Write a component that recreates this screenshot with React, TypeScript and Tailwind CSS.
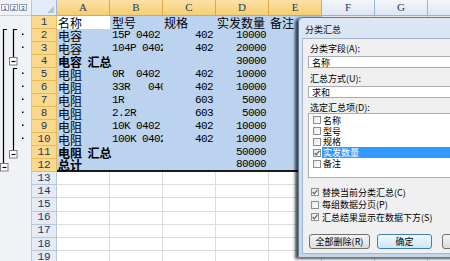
import type { ReactNode } from "react";

type Row = {
  a: string;
  b?: string;
  c?: string;
  d?: string;
  e?: string;
  bold?: boolean;
  head?: boolean;
};

const ROWS: Row[] = [
  { a: "名称", b: "型号", c: "规格", d: "实发数量", e: "备注", head: true },
  { a: "电容", b: "15P 0402", c: "402", d: "10000" },
  { a: "电容", b: "104P 0402", c: "402", d: "20000" },
  { a: "电容  汇总", d: "30000", bold: true },
  { a: "电阻", b: "0R  0402", c: "402", d: "10000" },
  { a: "电阻", b: "33R   0402", c: "402", d: "10000" },
  { a: "电阻", b: "1R", c: "603", d: "5000" },
  { a: "电阻", b: "2.2R", c: "603", d: "5000" },
  { a: "电阻", b: "10K 0402", c: "402", d: "10000" },
  { a: "电阻", b: "100K 0402", c: "402", d: "10000" },
  { a: "电阻  汇总", d: "50000", bold: true },
  { a: "总计", d: "80000", bold: true },
];

const COLS = ["A", "B", "C", "D", "E", "F", "G", "H"];
const DETAIL_ROWS = [2, 3, 5, 6, 7, 8, 9, 10];

function Minus({ x, y }: { x: number; y: number }) {
  return (
    <g>
      <rect x={x + 0.5} y={y + 0.5} width={7.5} height={7.5} fill="#fff" stroke="#7b7b7b" />
      <line x1={x + 2.5} y1={y + 4.5} x2={x + 6.5} y2={y + 4.5} stroke="#000" strokeWidth={1.2} />
    </g>
  );
}

function OutlinePane() {
  return (
    <div className="w-[32px] shrink-0 flex flex-col bg-[#f0f2f5] border-r border-[#bcc6d3]">
      {/* level buttons */}
      <div className="h-[16px] flex gap-[1px] pl-[1px] pt-[4px] border-b border-[#c5d0dd]">
        {["1", "2", "3"].map((n) => (
          <div
            key={n}
            className="w-[8px] h-[7px] border border-[#8f9eb3] bg-[#f7f8fa] flex items-center justify-center text-[6px] leading-none text-[#1e395b] font-['Liberation_Sans',sans-serif]"
          >
            {n}
          </div>
        ))}
      </div>
      <svg width="31" height="245" className="block">
        {/* level 2 bracket */}
        <path d="M7 13.5 H3.5 V147" fill="none" stroke="#000" strokeWidth={1.2} />
        {/* level 3 brackets */}
        <path d="M17 13.5 H13.5 V41" fill="none" stroke="#000" strokeWidth={1.2} />
        <path d="M17 52.5 H13.5 V134" fill="none" stroke="#000" strokeWidth={1.2} />
        {DETAIL_ROWS.map((r) => (
          <rect key={r} x={22} y={(r - 1) * 13 + 4.5} width={1.5} height={1.5} fill="#000" />
        ))}
        <Minus x={9} y={41} />
        <Minus x={9} y={134} />
        <Minus x={0} y={147} />
      </svg>
    </div>
  );
}

function HeaderRow() {
  return (
    <div className="h-[16px] flex">
      <div className="w-[25px] shrink-0 relative bg-[#e4ecf7] border-r border-b border-[#9eb6ce]">
        <svg width="8" height="8" className="absolute right-[1px] bottom-[1px]">
          <polygon points="7,0 7,7 0,7" fill="#b4c4d8" />
        </svg>
      </div>
      {COLS.map((c, i) => (
        <div
          key={c}
          className={
            i < 5
              ? "w-[53px] shrink-0 flex items-center justify-center bg-gradient-to-b from-[#fbe1a4] to-[#f6cd72] border-r border-b border-[#d9a94e] text-[11px] leading-none text-[#1e395b] font-['Liberation_Serif',serif]"
              : "w-[53px] shrink-0 flex items-center justify-center bg-gradient-to-b from-[#f3f6fb] to-[#dde6f2] border-r border-b border-[#9eb6ce] text-[11px] leading-none text-[#1e395b] font-['Liberation_Serif',serif]"
          }
        >
          {c}
        </div>
      ))}
    </div>
  );
}

function Cell({ children, className }: { children?: ReactNode; className: string }) {
  return <div className={className}>{children}</div>;
}

function DataRow({ row, n }: { row: Row; n: number }) {
  const last = n === 12;
  const sel = last
    ? "w-[53px] shrink-0 h-full flex items-center bg-[#bcd3ef] border-b-2 border-[#1c1c1c] whitespace-nowrap"
    : "w-[53px] shrink-0 h-full flex items-center bg-[#bcd3ef] whitespace-nowrap";
  const num = "font-['Liberation_Mono',monospace] text-[11px] tracking-[-0.6px]";
  const cjk = "text-[12px]";
  return (
    <div className="h-[13px] flex text-[12px] leading-[13px]">
      <div className="w-[25px] shrink-0 flex items-center justify-center bg-[#fad88c] border-r border-b border-[#eab95a] text-[11px] text-[#1e395b] font-['Liberation_Mono',monospace] leading-none">
        {n}
      </div>
      <Cell className={n === 1 ? "w-[53px] shrink-0 h-full flex items-center bg-white whitespace-nowrap" : sel}>
        <span className={row.bold ? "relative z-[1] pl-[1px] font-bold whitespace-pre " + cjk : "relative z-[1] pl-[1px] " + cjk}>
          {row.a}
        </span>
      </Cell>
      <Cell className={sel + " overflow-hidden"}>
        <span className={row.head ? "pl-[2px] " + cjk : "pl-[2px] whitespace-pre " + num}>{row.b}</span>
      </Cell>
      <Cell className={sel}>
        <span className={row.head ? "pl-[1px] " + cjk : "flex-1 pr-[3px] text-right " + num}>{row.c}</span>
      </Cell>
      <Cell className={sel}>
        <span className={row.head ? "pl-[1px] " + cjk : "flex-1 pr-[3px] text-right " + num}>{row.d}</span>
      </Cell>
      <Cell className={sel}>
        <span className={"pl-[1px] " + cjk}>{row.e}</span>
      </Cell>
      {[0, 1, 2].map((k) => (
        <div key={k} className="w-[53px] shrink-0 h-full border-r border-b border-[#dadcdd] bg-white" />
      ))}
    </div>
  );
}

function EmptyRow({ n }: { n: number }) {
  return (
    <div className="h-[13.2px] flex">
      <div className="w-[25px] shrink-0 flex items-center justify-center bg-[#e4ebf4] border-r border-b border-[#b8c8da] text-[11px] text-[#1e395b] font-['Liberation_Mono',monospace] leading-none">
        {n}
      </div>
      {COLS.map((c) => (
        <div key={c} className="w-[53px] shrink-0 h-full border-r border-b border-[#dadcdd] bg-white" />
      ))}
    </div>
  );
}

function Sheet() {
  return (
    <div className="flex flex-col">
      <HeaderRow />
      {ROWS.map((r, i) => (
        <DataRow key={i} row={r} n={i + 1} />
      ))}
      {[13, 14, 15, 16, 17, 18, 19].map((n) => (
        <EmptyRow key={n} n={n} />
      ))}
    </div>
  );
}

function Check({ on }: { on?: boolean }) {
  return (
    <div className="w-[8px] h-[8px] shrink-0 border border-[#8e8f8f] bg-gradient-to-br from-[#e6e6e6] to-[#ffffff] flex items-center justify-center">
      {on && (
        <svg width="6" height="6" viewBox="0 0 6 6">
          <path d="M0.6 3 L2.3 4.8 L5.4 0.8" fill="none" stroke="#4a5f80" strokeWidth={1.2} />
        </svg>
      )}
    </div>
  );
}

const LIST = ["名称", "型号", "规格", "实发数量", "备注"];

function Dialog() {
  return (
    <div className="absolute left-[298px] top-[17px] w-[165px] h-[241px] flex flex-col rounded-tl-[5px] border border-[#5f7b9e] bg-gradient-to-b from-[#dbe7f5] to-[#c3d6ee] shadow-[-3px_1px_3px_rgba(0,0,0,0.7)] text-[9px] leading-none text-black">
      <div className="h-[20px] shrink-0 flex items-center justify-between pl-[6px]">
        <span className="text-[#111] mt-[2px]">分类汇总</span>
        <div className="w-[8px] h-[13px] mt-[-5px] border border-r-0 border-[#8396b2] rounded-l-[3px] bg-gradient-to-b from-[#f5f8fc] to-[#d5e0ee]" />
      </div>
      <div className="flex-1 ml-[3px] mb-[3px] bg-[#f0f0f0] border border-r-0 border-[#a6b6ca] flex flex-col pl-[5px]">
        <div className="h-[11px] mt-[4px] pl-[2px] flex items-center">分类字段(A):</div>
        <div className="h-[12px] mt-[2px] border border-r-0 border-[#a5acb5] bg-white pl-[3px] flex items-center">名称</div>
        <div className="h-[11px] mt-[5px] pl-[2px] flex items-center">汇总方式(U):</div>
        <div className="h-[12px] mt-[2px] border border-r-0 border-[#a5acb5] bg-white pl-[3px] flex items-center">求和</div>
        <div className="h-[11px] mt-[4px] pl-[2px] flex items-center">选定汇总项(D):</div>
        <div className="h-[65px] border border-r-0 border-[#a5acb5] bg-white pt-[1px] flex flex-col">
          {LIST.map((t) => (
            <div key={t} className="h-[10.8px] flex items-center pl-[4px]">
              <Check on={t === "实发数量"} />
              <span
                className={
                  t === "实发数量"
                    ? "ml-[1px] flex-1 h-full flex items-center pl-[1px] bg-[#3399ff] text-white"
                    : "ml-[1px] flex-1 h-full flex items-center pl-[1px]"
                }
              >
                {t}
              </span>
            </div>
          ))}
        </div>
        <div className="mt-[8px] flex flex-col pl-[3px]">
          <div className="h-[12.5px] flex items-center gap-[3px]">
            <Check on />
            <span>替换当前分类汇总(C)</span>
          </div>
          <div className="h-[12.5px] flex items-center gap-[3px]">
            <Check />
            <span>每组数据分页(P)</span>
          </div>
          <div className="h-[12.5px] flex items-center gap-[3px]">
            <Check on />
            <span>汇总结果显示在数据下方(S)</span>
          </div>
        </div>
        <div className="mt-[10px] flex gap-[7px] pl-[1px]">
          <div className="w-[61px] h-[15px] shrink-0 rounded-[3px] border border-[#707070] bg-gradient-to-b from-[#f4f4f4] to-[#dcdcdc] flex items-center justify-center">
            全部删除(R)
          </div>
          <div className="w-[55px] h-[15px] shrink-0 rounded-[3px] border border-[#3c7fb1] bg-gradient-to-b from-[#f1f8fd] to-[#cfe6f6] flex items-center justify-center">
            确定
          </div>
          <div className="w-[55px] h-[15px] shrink-0 ml-[3px] rounded-[3px] border border-[#707070] bg-gradient-to-b from-[#f4f4f4] to-[#dcdcdc] flex items-center justify-center">
            取消
          </div>
        </div>
      </div>
    </div>
  );
}

export default function App() {
  return (
    <div className="relative w-[450px] h-[261px] overflow-hidden bg-white font-['Noto_Sans_CJK_SC','Liberation_Sans',sans-serif] text-black">
      <div className="flex">
        <OutlinePane />
        <Sheet />
      </div>
      <Dialog />
    </div>
  );
}
